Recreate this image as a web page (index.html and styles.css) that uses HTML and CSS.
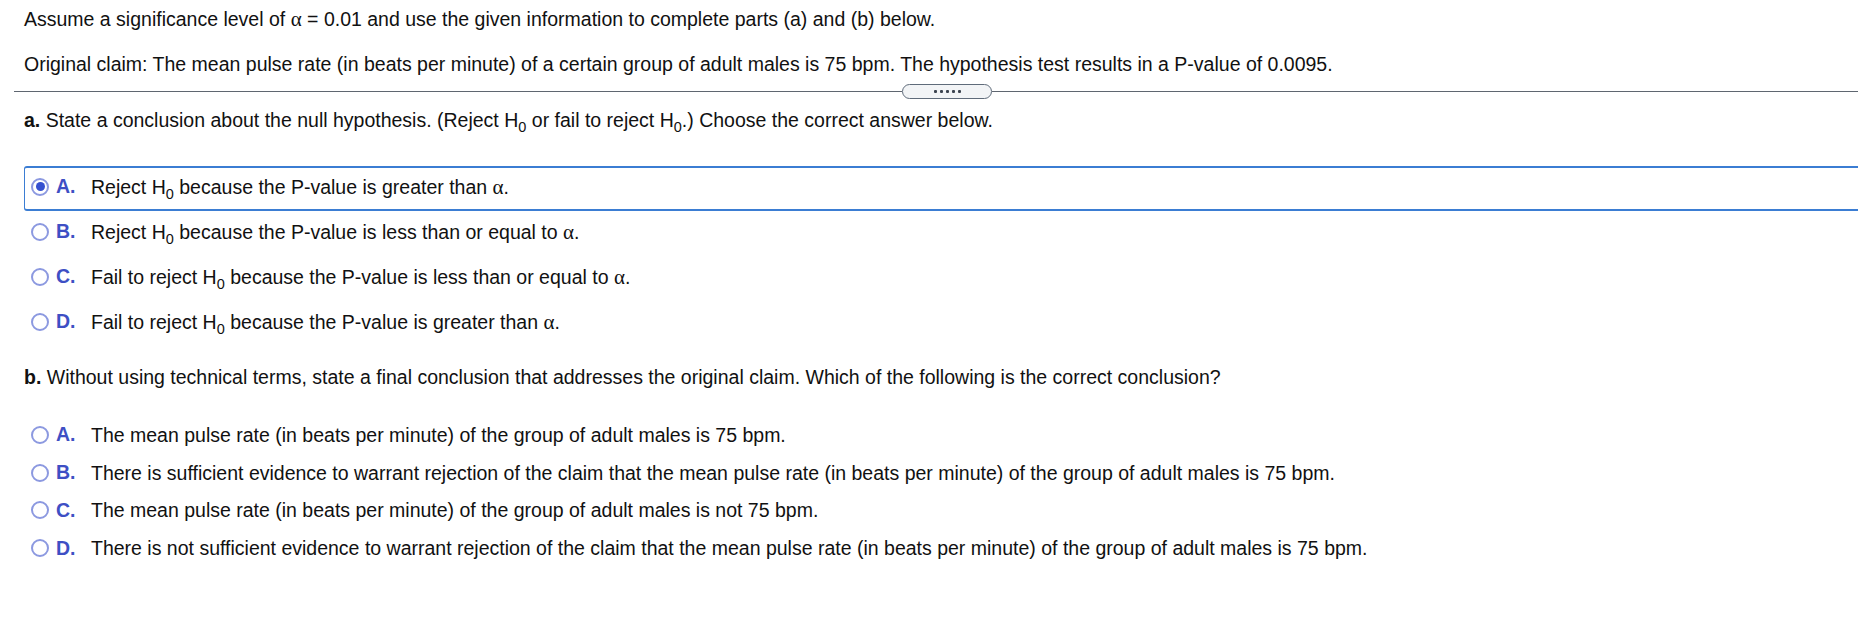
FILE: index.html
```html
<!DOCTYPE html>
<html>
<head>
<meta charset="utf-8">
<link rel="stylesheet" href="styles.css">
</head>
<body>
<div class="page">
  <p class="line first">Assume a significance level of <span class="greek">α</span> = 0.01 and use the given information to complete parts (a) and (b) below.</p>
  <p class="line second">Original claim: The mean pulse rate (in beats per minute) of a certain group of adult males is 75 bpm. The hypothesis test results in a P-value of 0.0095.</p>

  <div class="divider">
    <span class="rule"></span>
    <span class="pill"><i></i><i></i><i></i><i></i><i></i></span>
    <span class="rule"></span>
  </div>

  <p class="line part-a"><b>a.</b> State a conclusion about the null hypothesis. (Reject H<sub>0</sub> or fail to reject H<sub>0</sub>.) Choose the correct answer below.</p>

  <div class="options opts-a">
    <div class="opt selected"><span class="radio"></span><span class="letter">A.</span><span class="txt">Reject H<sub>0</sub> because the P-value is greater than <span class="greek">α</span>.</span></div>
    <div class="opt"><span class="radio"></span><span class="letter">B.</span><span class="txt">Reject H<sub>0</sub> because the P-value is less than or equal to <span class="greek">α</span>.</span></div>
    <div class="opt"><span class="radio"></span><span class="letter">C.</span><span class="txt">Fail to reject H<sub>0</sub> because the P-value is less than or equal to <span class="greek">α</span>.</span></div>
    <div class="opt"><span class="radio"></span><span class="letter">D.</span><span class="txt">Fail to reject H<sub>0</sub> because the P-value is greater than <span class="greek">α</span>.</span></div>
  </div>

  <p class="line part-b"><b>b.</b> Without using technical terms, state a final conclusion that addresses the original claim. Which of the following is the correct conclusion?</p>

  <div class="options opts-b">
    <div class="opt"><span class="radio"></span><span class="letter">A.</span><span class="txt">The mean pulse rate (in beats per minute) of the group of adult males is 75 bpm.</span></div>
    <div class="opt"><span class="radio"></span><span class="letter">B.</span><span class="txt">There is sufficient evidence to warrant rejection of the claim that the mean pulse rate (in beats per minute) of the group of adult males is 75 bpm.</span></div>
    <div class="opt"><span class="radio"></span><span class="letter">C.</span><span class="txt">The mean pulse rate (in beats per minute) of the group of adult males is not 75 bpm.</span></div>
    <div class="opt"><span class="radio"></span><span class="letter">D.</span><span class="txt">There is not sufficient evidence to warrant rejection of the claim that the mean pulse rate (in beats per minute) of the group of adult males is 75 bpm.</span></div>
  </div>
</div>
</body>
</html>
```

FILE: styles.css
```css
html, body {
  margin: 0;
  padding: 0;
  background: #ffffff;
}

body {
  font-family: "Liberation Sans", Arial, sans-serif;
  font-size: 19.5px;
  color: #111111;
  overflow: hidden;
}

.page {
  width: 1858px;
  height: 644px;
  overflow: hidden;
}

.line {
  margin: 0;
  padding-left: 24px;
  line-height: 22px;
  white-space: nowrap;
}

.first {
  padding-top: 7.5px;
}

.second {
  margin-top: 23px;
}

.greek {
  font-family: "Liberation Serif", "Times New Roman", serif;
  font-size: 21px;
}

sub {
  font-size: 14.5px;
  line-height: 0;
  vertical-align: -5px;
}

.divider {
  display: flex;
  align-items: center;
  margin-top: 9.5px;
  margin-left: 14px;
  height: 15px;
}

.rule {
  flex: 1;
  height: 1px;
  background: #5f6670;
}

.rule:first-child {
  flex: 0 0 888px;
}

.pill {
  display: flex;
  align-items: center;
  justify-content: center;
  gap: 3px;
  width: 88px;
  height: 13px;
  border: 1px solid #5f6b7a;
  border-radius: 8px;
  background: #f2f4f6;
}

.pill i {
  width: 3px;
  height: 3px;
  background: #3c4450;
  border-radius: 1px;
}

.part-a {
  margin-top: 10px;
}

.options {
  display: flex;
  flex-direction: column;
}

.opts-a {
  margin-top: 34.5px;
}

.opt {
  box-sizing: border-box;
  display: flex;
  align-items: center;
  margin-left: 24px;
  margin-right: -6px;
  padding-left: 6px;
  white-space: nowrap;
  border: 2px solid transparent;
  border-left-width: 1px;
  border-radius: 3px;
}

.opts-a .opt {
  height: 45px;
  padding-bottom: 3px;
}

.opts-b .opt {
  height: 37.8px;
}

.opt.selected {
  border-color: #3b7dd3;
}

.radio {
  box-sizing: border-box;
  width: 18px;
  height: 18px;
  border: 2px solid #8c99e0;
  border-radius: 50%;
  background: #fff;
  display: flex;
  align-items: center;
  justify-content: center;
  flex: 0 0 auto;
}

.selected .radio::after {
  content: "";
  width: 9px;
  height: 9px;
  border-radius: 50%;
  background: #3550d0;
}

.letter {
  width: 35px;
  margin-left: 7px;
  font-weight: bold;
  color: #3e4fc4;
}

.txt {
  line-height: 22px;
}

.part-b {
  margin-top: 20.5px;
}

.opts-b {
  margin-top: 28px;
}
```
